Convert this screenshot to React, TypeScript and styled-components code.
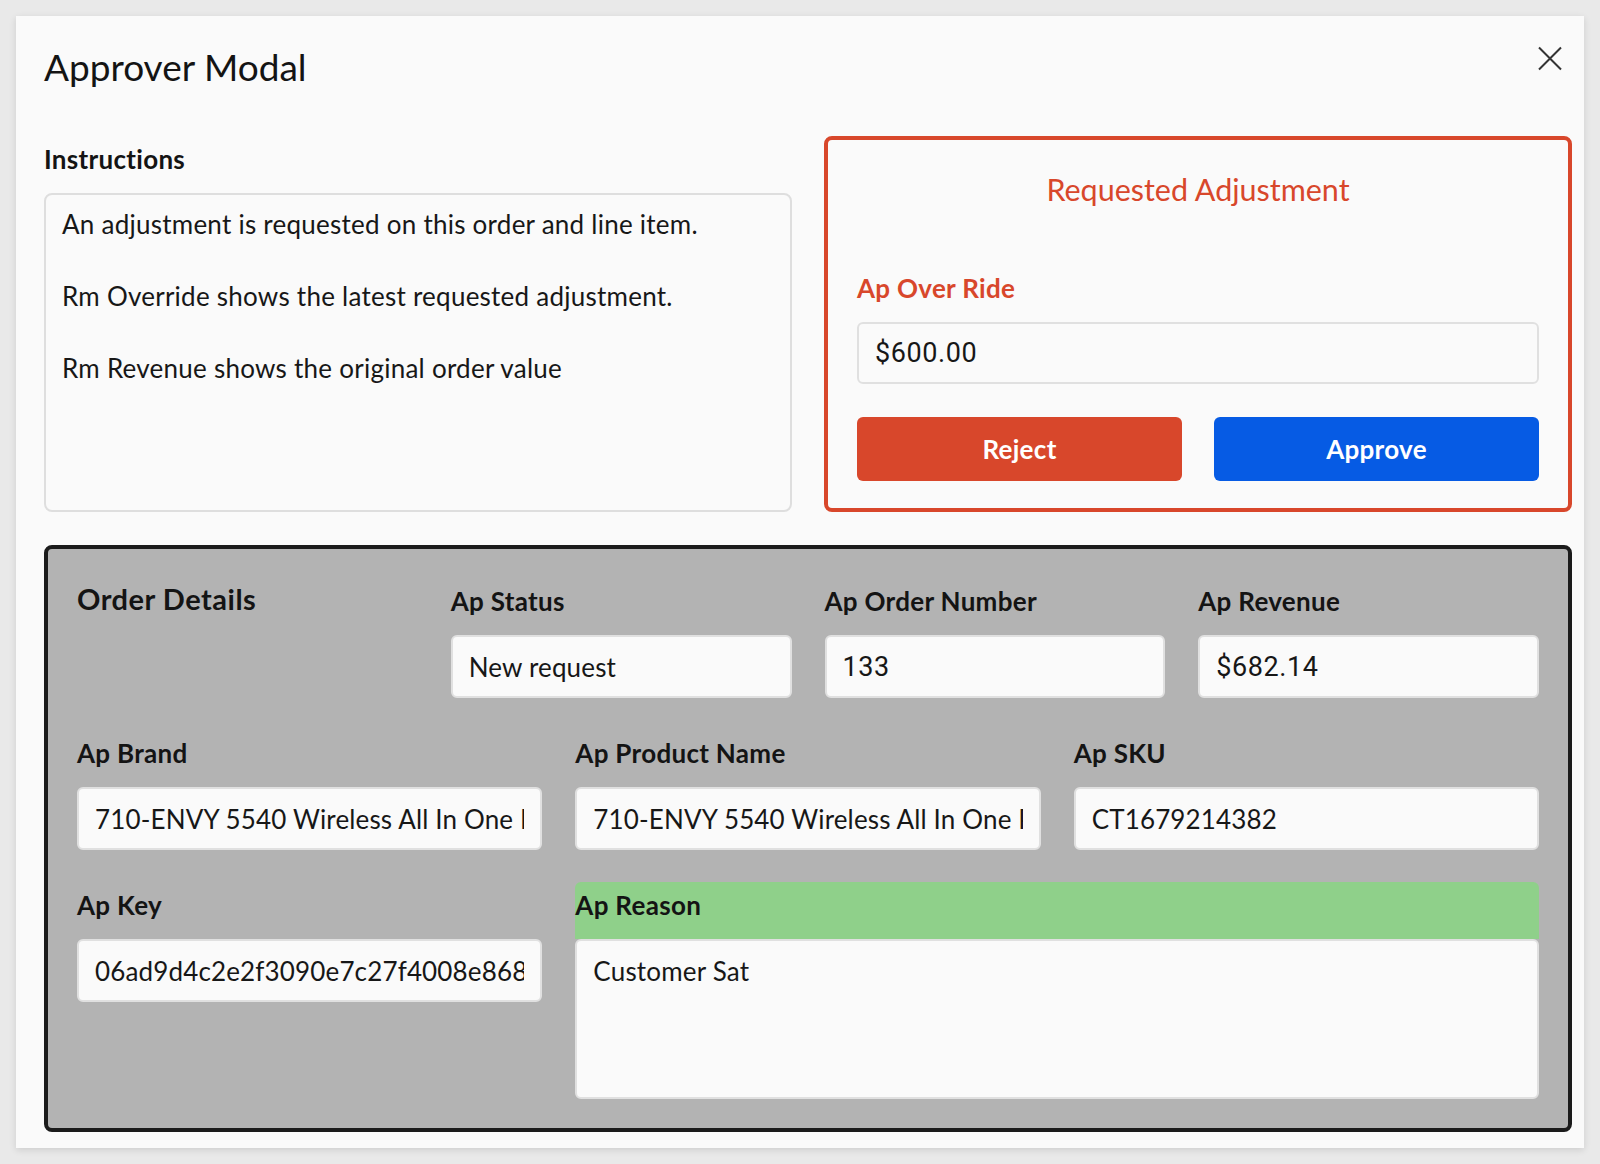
import React from "react";
import styled, { createGlobalStyle } from "styled-components";

const GlobalStyle = createGlobalStyle`
  html, body { margin: 0; padding: 0; background: #e9e9e9; }
  body { font-family: Lato, "Noto Sans", sans-serif; color: #171717; }
  *, *::before, *::after { box-sizing: border-box; }
`;

const RED = "#d8472b";
const BLUE = "#065be4";

const Page = styled.div`
  padding: 16px;
`;

const Modal = styled.div`
  width: 1568px;
  height: 1132px;
  background: #fafafa;
  box-shadow: 0 2px 7px rgba(0, 0, 0, 0.12);
  padding: 0 12px 16px 28px;
  display: flex;
  flex-direction: column;
`;

const Header = styled.header`
  height: 120px;
  display: flex;
  justify-content: space-between;
  align-items: flex-start;
`;

const Title = styled.h1`
  margin: 27px 0 0;
  font-size: 37px;
  font-weight: 400;
  line-height: 48px;
  color: #141414;
`;

const CloseButton = styled.button`
  margin: 30px 10px 0 0;
  width: 24px;
  height: 25px;
  padding: 0;
  border: 0;
  background: none;
  cursor: pointer;
  display: flex;
`;

const TopRow = styled.div`
  display: grid;
  grid-template-columns: 1fr 1fr;
  column-gap: 32px;
  height: 376px;
`;

const Column = styled.div`
  display: flex;
  flex-direction: column;
  min-width: 0;
`;

const Label = styled.div<{ $tone?: "red" | "green" }>`
  height: 57px;
  padding-top: 8px;
  font-size: 26px;
  font-weight: 700;
  line-height: 31px;
  letter-spacing: 0.3px;
  color: ${(p) => (p.$tone === "red" ? RED : "#141414")};
  background: ${(p) => (p.$tone === "green" ? "#8fd08a" : "transparent")};
  border-radius: ${(p) => (p.$tone === "green" ? "6px 6px 0 0" : "0")};
  white-space: nowrap;
`;

const InstructionsBox = styled.div`
  flex: 1;
  border: 2px solid #dedede;
  border-radius: 8px;
  padding: 11px 16px;
  background: #fafafa;
`;

const Paragraph = styled.p`
  margin: 0 0 36px;
  font-size: 26px;
  line-height: 36px;
  letter-spacing: 0.25px;
`;

const RequestBox = styled.section`
  border: 4px solid ${RED};
  border-radius: 8px;
  padding: 30px 29px 0;
  display: flex;
  flex-direction: column;
`;

const RequestTitle = styled.h2`
  margin: 0 0 57px;
  text-align: center;
  font-size: 30.5px;
  font-weight: 400;
  line-height: 38px;
  color: ${RED};
`;

const TextInput = styled.input<{ $numeric?: boolean; $h?: number }>`
  width: 100%;
  height: ${(p) => p.$h ?? 63}px;
  border: 2px solid #e0e0e0;
  border-radius: 6px;
  background: #fafafa;
  padding: 0 16px;
  font-family: ${(p) => (p.$numeric ? "Roboto, sans-serif" : "Lato, sans-serif")};
  font-size: ${(p) => (p.$numeric ? 27 : 26)}px;
  letter-spacing: ${(p) => (p.$numeric ? 0.6 : 0.15)}px;
  color: #171717;
  outline: none;
`;

const ButtonRow = styled.div`
  margin-top: 33px;
  display: grid;
  grid-template-columns: 1fr 1fr;
  column-gap: 32px;
`;

const ActionButton = styled.button<{ $variant: "reject" | "approve" }>`
  height: 64px;
  border: 0;
  border-radius: 6px;
  background: ${(p) => (p.$variant === "reject" ? RED : BLUE)};
  color: #fff;
  font-family: Lato, sans-serif;
  font-size: 26px;
  font-weight: 700;
  letter-spacing: 0.3px;
  cursor: pointer;
`;

const OrderBox = styled.section`
  margin-top: 33px;
  height: 587px;
  border: 4px solid #1b1b1b;
  border-radius: 8px;
  background: #b3b3b3;
  padding: 29px;
  display: grid;
  grid-template-columns: repeat(12, minmax(0, 1fr));
  grid-template-rows: auto auto 1fr;
  column-gap: 33px;
  row-gap: 32px;
`;

const OrderHeading = styled.h3`
  grid-column: span 3;
  margin: 0;
  padding-top: 3px;
  font-size: 29px;
  font-weight: 700;
  line-height: 36px;
  letter-spacing: 0.5px;
  color: #141414;
`;

const Field = styled.div<{ $span: number }>`
  grid-column: span ${(p) => p.$span};
  display: flex;
  flex-direction: column;
  min-width: 0;
`;

const ReasonArea = styled.textarea`
  width: 100%;
  height: 160px;
  resize: none;
  border: 2px solid #e0e0e0;
  border-radius: 6px;
  background: #fafafa;
  padding: 12px 16px;
  font-family: Lato, sans-serif;
  font-size: 26px;
  line-height: 36px;
  letter-spacing: 0.2px;
  color: #171717;
  outline: none;
`;

const CloseIcon = () => (
  <svg width="24" height="25" viewBox="0 0 24 25" fill="none">
    <path d="M1 1.5 L23 23.5 M23 1.5 L1 23.5" stroke="#333" strokeWidth="2" />
  </svg>
);

const productName = "710-ENVY 5540 Wireless All In One Printer";

export default function App() {
  return (
    <>
      <GlobalStyle />
      <Page>
        <Modal>
          <Header>
            <Title>Approver Modal</Title>
            <CloseButton aria-label="Close">
              <CloseIcon />
            </CloseButton>
          </Header>

          <TopRow>
            <Column>
              <Label>Instructions</Label>
              <InstructionsBox>
                <Paragraph>An adjustment is requested on this order and line item.</Paragraph>
                <Paragraph>Rm Override shows the latest requested adjustment.</Paragraph>
                <Paragraph>Rm Revenue shows the original order value</Paragraph>
              </InstructionsBox>
            </Column>

            <RequestBox>
              <RequestTitle>Requested Adjustment</RequestTitle>
              <Label $tone="red">Ap Over Ride</Label>
              <TextInput $numeric $h={62} readOnly defaultValue="$600.00" />
              <ButtonRow>
                <ActionButton $variant="reject">Reject</ActionButton>
                <ActionButton $variant="approve">Approve</ActionButton>
              </ButtonRow>
            </RequestBox>
          </TopRow>

          <OrderBox>
            <OrderHeading>Order Details</OrderHeading>
            <Field $span={3}>
              <Label>Ap Status</Label>
              <TextInput readOnly defaultValue="New request" />
            </Field>
            <Field $span={3}>
              <Label>Ap Order Number</Label>
              <TextInput $numeric readOnly defaultValue="133" />
            </Field>
            <Field $span={3}>
              <Label>Ap Revenue</Label>
              <TextInput $numeric readOnly defaultValue="$682.14" />
            </Field>

            <Field $span={4}>
              <Label>Ap Brand</Label>
              <TextInput readOnly defaultValue={productName} />
            </Field>
            <Field $span={4}>
              <Label>Ap Product Name</Label>
              <TextInput readOnly defaultValue={productName} />
            </Field>
            <Field $span={4}>
              <Label>Ap SKU</Label>
              <TextInput readOnly defaultValue="CT1679214382" />
            </Field>

            <Field $span={4}>
              <Label>Ap Key</Label>
              <TextInput readOnly defaultValue="06ad9d4c2e2f3090e7c27f4008e86840a1b2c3d4" />
            </Field>
            <Field $span={8}>
              <Label $tone="green">Ap Reason</Label>
              <ReasonArea readOnly defaultValue="Customer Sat" />
            </Field>
          </OrderBox>
        </Modal>
      </Page>
    </>
  );
}
